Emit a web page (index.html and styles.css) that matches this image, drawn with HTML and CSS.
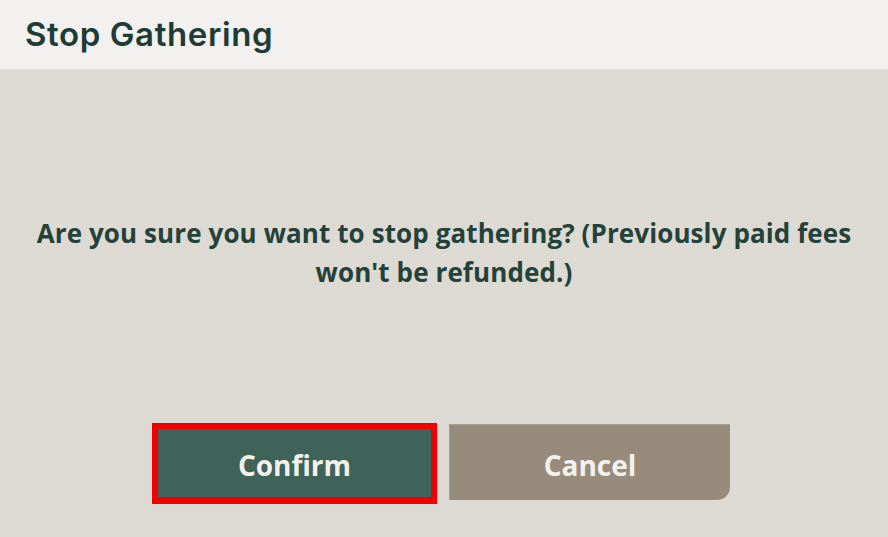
FILE: index.html
```html
<!DOCTYPE html>
<html lang="en">
<head>
  <meta charset="UTF-8" />
  <title>Stop Gathering</title>
  <link rel="stylesheet" href="styles.css">
</head>
<body>
  <div class="dialog">
    <div class="dialog-header">
      <h1>Stop Gathering</h1>
    </div>
    <div class="dialog-body">
      <p class="message">Are you sure you want to stop gathering? (Previously paid fees won't be refunded.)</p>
      <div class="actions">
        <button class="btn btn-confirm">Confirm</button>
        <button class="btn btn-cancel">Cancel</button>
      </div>
    </div>
  </div>
</body>
</html>
```

FILE: styles.css
```css
body {
  margin: 0;
  padding: 0;
  background: #dddad3;
  font-family: "Open Sans", "Noto Sans", sans-serif;
  overflow: hidden;
}

.dialog {
  width: 888px;
  height: 537px;
  display: flex;
  flex-direction: column;
}

.dialog-header {
  height: 70px;
  box-sizing: border-box;
  background: #f2f1ef;
  border-bottom: 1px solid #e4e1db;
  padding-left: 25px;
  padding-bottom: 1px;
  display: flex;
  align-items: center;
}

.dialog-header h1 {
  margin: 0;
  font-family: Inter, "Noto Sans", sans-serif;
  font-weight: 600;
  font-size: 33px;
  letter-spacing: 0.6px;
  color: #1e3b34;
}

.dialog-body {
  flex: 1;
  background: #dddad3;
  display: flex;
  flex-direction: column;
  align-items: center;
  padding-top: 144px;
}

.message {
  margin: 0;
  width: 840px;
  text-align: center;
  font-weight: 700;
  font-size: 26px;
  letter-spacing: 0.1px;
  line-height: 39px;
  color: #24413a;
}

.actions {
  display: flex;
  align-items: flex-start;
  gap: 12px;
  margin-top: 131px;
  padding-right: 6px;
}

.btn {
  font-family: "Open Sans", "Noto Sans", sans-serif;
  font-weight: 700;
  font-size: 28px;
  color: #f3f1ec;
  border: none;
  padding: 4px 0 0;
  cursor: pointer;
  box-sizing: border-box;
}

.btn-confirm {
  width: 285px;
  height: 81px;
  background: #3f6259;
  border: 6px solid #f00000;
  border-bottom-width: 7px;
}

.btn-cancel {
  width: 281px;
  height: 76px;
  margin-top: 1px;
  background: #978b7c;
  border-top: 1px solid #a89d90;
  border-left: 1px solid #a89d90;
  border-bottom-right-radius: 13px;
}
```
